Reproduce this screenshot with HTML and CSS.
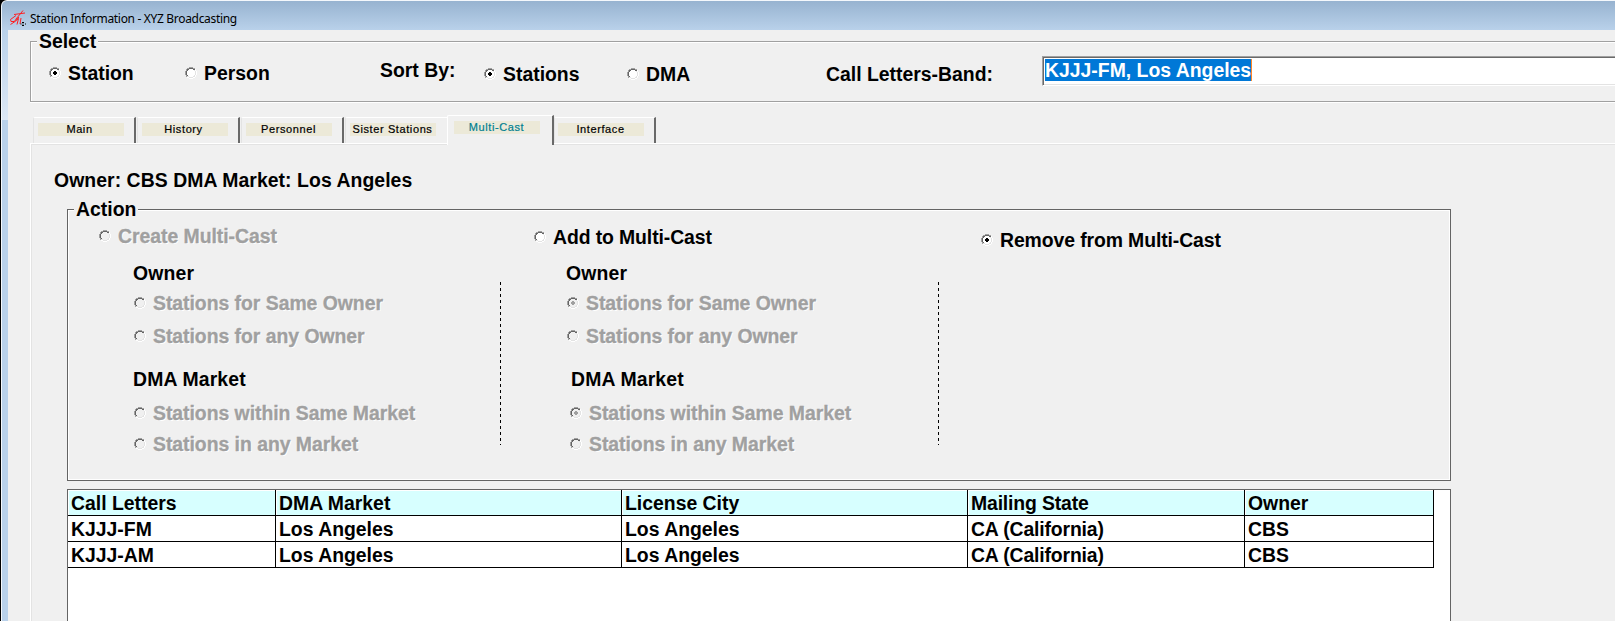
FILE: index.html
```html
<!DOCTYPE html>
<html lang="en">
<head>
<meta charset="utf-8">
<title>Station Information - XYZ Broadcasting</title>
<link rel="stylesheet" href="styles.css">
</head>
<body>
<svg class="defs" width="0" height="0">
  <symbol id="ring" viewBox="0 0 12 12">
    <path class="fill" d="M4 2h4v1h1v1h1v4h-1v1h-1v1h-4v-1h-1v-1h-1v-4h1v-1h1z"/>
    <path fill="#a0a0a0" d="M4 0h4v1h-4zM2 1h2v1h-2zM8 1h2v1h-2zM1 2h1v2h-1zM0 4h1v4h-1zM1 8h1v2h-1z"/>
    <path fill="#646464" d="M4 1h4v1h-4zM2 2h2v1h-2zM8 2h2v1h-2zM2 3h1v1h-1zM1 4h1v4h-1zM2 8h1v1h-1z"/>
    <path fill="#e3e3e3" d="M9 3h1v1h-1zM10 4h1v4h-1zM9 8h1v1h-1zM8 9h2v1h-2zM4 10h4v1h-4zM2 9h2v1h-2z"/>
    <path fill="#fff" d="M10 2h1v2h-1zM11 4h1v4h-1zM10 8h1v2h-1zM8 10h2v1h-2zM4 11h4v1h-4zM2 10h2v1h-2z"/>
  </symbol>
  <symbol id="dot" viewBox="0 0 12 12"><path d="M5 4h2v1h1v2h-1v1h-2v-1h-1v-2h1z"/></symbol>
</svg>
<div class="window">
  <header class="titlebar">
    <svg class="logo" width="18" height="18" viewBox="0 0 18 18">
      <path d="M14 .5L9.500 6L6.500 9.500M5 4.500L16 3M7 5.500L1.500 9.500L2 11.500L5 11.500L10 7M1.500 14.500L6 11.500L9.500 8.500L8 14.500M12 8L11 14" fill="none" stroke="#ff1e22" stroke-width="1"/>
      <path d="M13 12h2v1h-2zM13 15h2v1h-2zM11.500 13.500h1v1h-1zM13.500 13.500h1v1h-1zM16 13.500h1v1h-1z" fill="#000"/>
    </svg>
    <span class="title">Station Information - XYZ Broadcasting</span>
  </header>
  <div class="body">
    <div class="frame"></div>
    <main class="client">
      <section class="group select">
        <h2 class="legend">Select</h2>
        <div class="select-row">
          <label class="radio station"><svg class="rb"><use href="#ring"/><use href="#dot"/></svg><span>Station</span></label>
          <label class="radio person"><svg class="rb"><use href="#ring"/></svg><span>Person</span></label>
          <span class="sort">Sort By:</span>
          <label class="radio stations"><svg class="rb"><use href="#ring"/><use href="#dot"/></svg><span>Stations</span></label>
          <label class="radio dma"><svg class="rb"><use href="#ring"/></svg><span>DMA</span></label>
          <span class="band">Call Letters-Band:</span>
          <div class="field"><span class="selection">KJJJ-FM, Los Angeles</span></div>
        </div>
      </section>
      <nav class="tabs">
        <div class="tab"><span class="cap">Main</span></div>
        <div class="tab"><span class="cap">History</span></div>
        <div class="tab"><span class="cap">Personnel</span></div>
        <div class="tab plain"><span class="cap">Sister Stations</span></div>
        <div class="tab active"><span class="cap">Multi-Cast</span></div>
        <div class="tab last"><span class="cap">Interface</span></div>
      </nav>
      <section class="panel">
        <p class="owner-line">Owner: CBS DMA Market: Los Angeles</p>
        <section class="group action">
          <h2 class="legend">Action</h2>
          <div class="columns">
            <div class="column create">
              <label class="radio off"><svg class="rb"><use href="#ring"/></svg><span>Create Multi-Cast</span></label>
              <h3 class="sub">Owner</h3>
              <label class="radio off in"><svg class="rb"><use href="#ring"/></svg><span>Stations for Same Owner</span></label>
              <label class="radio off in any"><svg class="rb"><use href="#ring"/></svg><span>Stations for any Owner</span></label>
              <h3 class="sub market">DMA Market</h3>
              <label class="radio off in within"><svg class="rb"><use href="#ring"/></svg><span>Stations within Same Market</span></label>
              <label class="radio off in all"><svg class="rb"><use href="#ring"/></svg><span>Stations in any Market</span></label>
            </div>
            <div class="divider"></div>
            <div class="column add">
              <label class="radio"><svg class="rb"><use href="#ring"/></svg><span>Add to Multi-Cast</span></label>
              <h3 class="sub">Owner</h3>
              <label class="radio off in"><svg class="rb"><use href="#ring"/><use href="#dot"/></svg><span>Stations for Same Owner</span></label>
              <label class="radio off in any"><svg class="rb"><use href="#ring"/></svg><span>Stations for any Owner</span></label>
              <h3 class="sub market">DMA Market</h3>
              <label class="radio off in within"><svg class="rb"><use href="#ring"/><use href="#dot"/></svg><span>Stations within Same Market</span></label>
              <label class="radio off in all"><svg class="rb"><use href="#ring"/></svg><span>Stations in any Market</span></label>
            </div>
            <div class="divider"></div>
            <div class="column remove">
              <label class="radio"><svg class="rb"><use href="#ring"/><use href="#dot"/></svg><span>Remove from Multi-Cast</span></label>
            </div>
          </div>
        </section>
        <div class="list">
          <div class="row head"><span>Call Letters</span><span>DMA Market</span><span>License City</span><span>Mailing State</span><span>Owner</span></div>
          <div class="row"><span>KJJJ-FM</span><span>Los Angeles</span><span>Los Angeles</span><span>CA (California)</span><span>CBS</span></div>
          <div class="row"><span>KJJJ-AM</span><span>Los Angeles</span><span>Los Angeles</span><span>CA (California)</span><span>CBS</span></div>
        </div>
      </section>
    </main>
  </div>
</div>
</body>
</html>
```
FILE: styles.css
```css
* { box-sizing: border-box; }
body {
  margin: 0;
  height: 621px;
  overflow: hidden;
  background: #f0f0f0;
  color: #000;
  font: bold 19.4px/22px "Liberation Sans", Arial, sans-serif;
  white-space: nowrap;
}
h2, h3, p { margin: 0; font: inherit; }
.defs { display: block; height: 0; }
.window { height: 621px; display: flex; flex-direction: column; background: #000; }

.titlebar {
  height: 30px;
  flex: none;
  display: flex;
  align-items: flex-start;
  padding: 9px 0 0 7px;
  margin-left: 1px;
  border-top: 1px solid #f4f8fc;
  border-left: 1px solid #eef4fa;
  border-top-left-radius: 6px;
  background: linear-gradient(#97b3d0, #b9d1ea);
}
.logo { flex: none; }
.title {
  margin: 0 0 0 3px;
  font: 12px/18px "Noto Sans", "Open Sans", sans-serif;
  letter-spacing: -0.32px;
}

.body { flex: 1; display: flex; min-height: 0; }
.frame {
  width: 7px;
  margin-left: 1px;
  flex: none;
  border-left: 1px solid #f4f8fc;
  background: linear-gradient(#b9d1ea, #dde8f5) 0 0 / 100% 90px no-repeat #b9d1ea;
}
.client { flex: 1; min-width: 0; overflow: hidden; background: #f0f0f0; padding: 11px 0 0 22px; }

.group { border: 1px solid #a0a0a0; box-shadow: inset 1px 1px #fff, 0 1px #fff; }
.legend { width: max-content; background: #f0f0f0; }
.select { height: 61px; border-right: 0; }
.select .legend { margin: -12px 0 0 6px; padding: 0 2px; }
.select-row { display: flex; align-items: flex-start; height: 50px; padding-top: 4px; }

.radio { display: flex; align-items: center; height: 22px; gap: 7px; }
.rb { width: 12px; height: 12px; flex: none; shape-rendering: crispEdges; fill: #000; --face: #fff; }
.fill { fill: var(--face); }
.off { color: #a0a0a0; text-shadow: 1px 1px #fff; letter-spacing: -.03px; -webkit-text-stroke: .3px #a0a0a0; }
.off .rb { fill: #a0a0a0; --face: #f0f0f0; }

.station { width: 136px; margin: 6px 0 0 18px; }
.person { width: 195px; margin-top: 6px; }
.sort { width: 104px; margin-top: 3px; }
.stations { width: 143px; margin-top: 7px; }
.dma { width: 199px; margin-top: 7px; }
.band { width: 216px; margin-top: 7px; }
.field {
  flex: 1;
  height: 30px;
  padding: 1px 0 0 2px;
  background: #fff;
  border: 1px solid #a0a0a0;
  border-right: 0;
  border-bottom-color: #fff;
  box-shadow: inset 1px 1px #696969, inset 0 -1px #e3e3e3;
}
.selection { display: block; width: 207px; height: 22px; margin-top: 1px; background: #0078d7; border-right: 1px solid #ff8728; color: #fff; line-height: 22px; }

.tabs { display: flex; align-items: flex-end; height: 29px; margin-top: 12px; padding: 0 0 0 3px; }
.tab {
  width: 103px;
  height: 26px;
  margin-right: 1px;
  padding: 5px 0 0 4px;
  border: 1px solid #fff;
  border-left-color: #e3e3e3;
  border-right: 2px solid #696969;
  border-bottom: 0;
  border-top-left-radius: 2px;
}
.cap { display: block; width: 86px; height: 13px; padding-right: 1px; background: #ece9d8; font: 400 11px/13px "Liberation Sans", Arial, sans-serif; text-align: center; letter-spacing: .6px; -webkit-text-stroke: .2px currentColor; }
.tab:first-child .cap, .tab:nth-child(2) .cap { padding-right: 3px; }
.tab.plain { border-right: 0; width: 102px; margin: 0; }
.tab.active { position: relative; width: 107px; height: 30px; margin: 0 0 -2px; padding: 5px 0 0 6px; border-left-color: #fff; background: #f0f0f0; color: #008090; }
.tab.last { width: 102px; padding-left: 3px; }

.panel { border-left: 1px solid #fff; border-top: 1px solid #fff; box-shadow: inset 1px 1px #e3e3e3; padding: 25px 0 0 36px; }
.owner-line { margin-left: -13px; letter-spacing: .06px; }
.action { width: 1384px; height: 272px; margin-top: 18px; border-color: #646464; box-shadow: inset 1px 1px #fff, inset -1px -1px #fff; }
.action .legend { margin: -12px 0 0 6px; padding: 0 2px; }
.columns { display: flex; align-items: flex-start; }
.column { display: flex; flex-direction: column; align-items: flex-start; }
.create { width: 401px; margin-left: 31px; padding-top: 5px; }
.sub { margin: 15px 0 0 34px; letter-spacing: .15px; }
.in { margin: 8px 0 0 35px; }
.any { margin-top: 11px; }
.market { margin-top: 21px; }
.within { margin-top: 12px; }
.all { margin-top: 9px; }
.divider { width: 1px; height: 163px; margin-top: 62px; background: repeating-linear-gradient(#000 0 3px, transparent 3px 6px); }
.add { width: 404px; margin-left: 33px; padding-top: 6px; }
.add .sub { margin: 14px 0 0 32px; }
.add .in { margin-left: 33px; }
.add .market { margin: 21px 0 0 37px; }
.add .within, .add .all { margin-left: 36px; }
.remove { margin-left: 42px; padding-top: 9px; }
.add > .radio:first-child, .remove .radio { letter-spacing: -.1px; }

.list { width: 1384px; height: 141px; margin-top: 8px; border: 1px solid #646464; border-bottom: 0; background: #fff; padding-right: 16px; }
.row { display: grid; grid-template-columns: 208px 346px 346px 277px 189px; height: 26px; }
.row span { padding: 2px 0 0 3px; border-right: 1px solid #000; border-bottom: 1px solid #000; }
.row span:nth-child(4) { letter-spacing: -.15px; }
.head span { background: #d7ffff; box-shadow: inset 1px 1px #fff; }
```
